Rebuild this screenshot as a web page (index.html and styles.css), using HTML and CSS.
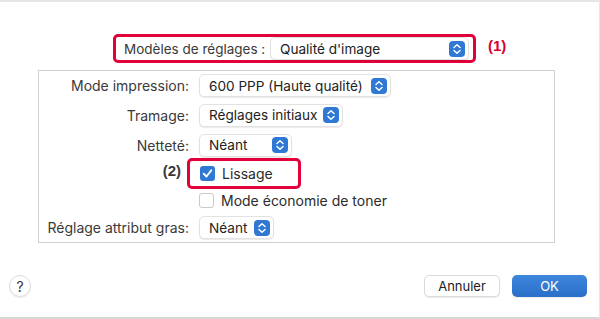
FILE: index.html
```html
<!DOCTYPE html>
<html lang="fr">
<head>
    <meta charset="UTF-8">
    <title>Modèles de réglages</title>
    <link rel="stylesheet" href="styles.css">
</head>
<body>

<div class="dialog">
    <div class="preset-row">
        <div class="mark preset-box">
            <span class="preset-label">Modèles de réglages :</span>
            <div class="popup preset-popup">
                <span>Qualité d'image</span>
                <svg class="stepper" viewBox="0 0 16 16"><rect width="16" height="16" rx="4"/><path d="M5 6.5 8 3.8 11 6.5M5 9.5 8 12.2 11 9.5"/></svg>
            </div>
        </div>
        <span class="tag">(1)</span>
    </div>

    <div class="group">
        <label class="row-label">Mode impression:</label>
        <div class="popup w-mode">
            <span>600 PPP (Haute qualité)</span>
            <svg class="stepper" viewBox="0 0 16 16"><rect width="16" height="16" rx="4"/><path d="M5 6.5 8 3.8 11 6.5M5 9.5 8 12.2 11 9.5"/></svg>
        </div>

        <label class="row-label">Tramage:</label>
        <div class="popup w-tramage">
            <span>Réglages initiaux</span>
            <svg class="stepper" viewBox="0 0 16 16"><rect width="16" height="16" rx="4"/><path d="M5 6.5 8 3.8 11 6.5M5 9.5 8 12.2 11 9.5"/></svg>
        </div>

        <label class="row-label">Netteté:</label>
        <div class="popup w-nettete">
            <span>Néant</span>
            <svg class="stepper" viewBox="0 0 16 16"><rect width="16" height="16" rx="4"/><path d="M5 6.5 8 3.8 11 6.5M5 9.5 8 12.2 11 9.5"/></svg>
        </div>

        <span class="row-label tag tag-2">(2)</span>
        <div class="mark check-box">
            <span class="check on"><svg viewBox="0 0 16 16"><path d="M4 8.3 6.9 11.2 12 4.6"/></svg></span>
            <span>Lissage</span>
        </div>

        <span></span>
        <div class="check-row">
            <span class="check"></span>
            <span>Mode économie de toner</span>
        </div>

        <label class="row-label">Réglage attribut gras:</label>
        <div class="popup w-gras">
            <span>Néant</span>
            <svg class="stepper" viewBox="0 0 16 16"><rect width="16" height="16" rx="4"/><path d="M5 6.5 8 3.8 11 6.5M5 9.5 8 12.2 11 9.5"/></svg>
        </div>
    </div>

    <div class="footer">
        <span class="help">?</span>
        <div class="actions">
            <button class="btn">Annuler</button>
            <button class="btn btn-ok">OK</button>
        </div>
    </div>
</div>

</body>
</html>
```

FILE: styles.css
```css
body {
    margin: 0;
    background-color: #fff;
    font-family: "Inter", "Liberation Sans", sans-serif;
    font-size: 14px;
    color: #2b2b2b;
}
.dialog {
    height: 319px;
    box-sizing: border-box;
    border-top: 2px solid #e6e6e6;
    border-bottom: 2px solid #d8d8d8;
    border-right: 1px solid #e6e6e6;
    display: flex;
    flex-direction: column;
}

/* red annotation frames */
.mark {
    border: 3px solid #e2003a;
    border-radius: 5px;
    box-sizing: border-box;
}
.tag {
    color: #d9002f;
    font-weight: bold;
    font-family: "Liberation Sans", sans-serif;
    font-size: 15px;
}

.preset-row {
    display: flex;
    align-items: center;
    padding-left: 113px;
    margin-top: 32px;
    font-size: 13.5px;
}
.preset-box {
    display: flex;
    align-items: center;
    width: 363px;
    height: 29px;
    padding-left: 8px;
}
.preset-label {
    color: #3a3a3a;
    width: 146px;
}
.preset-popup {
    width: 199px;
    height: 22px;
    padding-left: 14px;
    border-color: #ececec;
    box-shadow: none;
}
.preset-row .tag {
    margin-left: 12px;
    margin-top: -7px;
}

/* popup buttons */
.popup {
    display: flex;
    align-items: center;
    justify-content: space-between;
    box-sizing: border-box;
    height: 23px;
    padding: 0 3px 0 9px;
    border: 1px solid #e2e2e2;
    border-radius: 5px;
    background-color: #fff;
    box-shadow: 0 1px 1px rgba(0, 0, 0, 0.08);
    color: #222;
    font-size: 13.6px;
}
.stepper {
    width: 16px;
    height: 16px;
    flex-shrink: 0;
}
.stepper rect {
    fill: #2f78d4;
}
.stepper path {
    fill: none;
    stroke: #fff;
    stroke-width: 1.5;
    stroke-linecap: round;
    stroke-linejoin: round;
}
.w-mode { width: 192px; }
.w-tramage { width: 144px; }
.w-nettete { width: 93px; }
.w-gras { width: 75px; }

.group {
    margin-left: 38px;
    margin-top: 7px;
    width: 517px;
    box-sizing: border-box;
    border: 1px solid #cfcfcf;
    display: grid;
    grid-template-columns: 150px auto;
    grid-template-rows: 29px 30px 30px 27px 26px 29px;
    column-gap: 10px;
    align-items: center;
    justify-items: start;
}
.row-label {
    justify-self: end;
    color: #3a3a3a;
}
.tag-2 {
    margin-right: 8px;
    margin-top: -6px;
}

/* checkboxes */
.check-box {
    display: flex;
    align-items: center;
    gap: 7px;
    width: 114px;
    height: 31px;
    margin-left: -12px;
    padding-left: 10px;
}
.check-row {
    display: flex;
    align-items: center;
    gap: 7px;
}
.check {
    width: 15px;
    height: 15px;
    box-sizing: border-box;
    border: 1px solid #c9c9c9;
    border-radius: 3px;
    background-color: #fff;
    display: flex;
}
.check.on {
    border: none;
    background-color: #2f78d4;
}
.check svg {
    width: 15px;
    height: 15px;
}
.check path {
    fill: none;
    stroke: #fff;
    stroke-width: 2;
    stroke-linecap: round;
    stroke-linejoin: round;
}

/* bottom bar */
.footer {
    display: flex;
    align-items: center;
    justify-content: space-between;
    margin-top: 32px;
    padding: 0 12px 0 9px;
}
.help {
    width: 22px;
    height: 22px;
    box-sizing: border-box;
    border: 1px solid #dcdcdc;
    border-radius: 50%;
    box-shadow: 0 1px 1px rgba(0, 0, 0, 0.08);
    display: flex;
    align-items: center;
    justify-content: center;
    font-size: 14px;
    color: #333;
}
.actions {
    display: flex;
    gap: 12px;
}
.btn {
    width: 76px;
    height: 22px;
    font-family: "Inter", "Liberation Sans", sans-serif;
    font-size: 13px;
    color: #222;
    background-color: #fff;
    border: 1px solid #dadada;
    border-radius: 5px;
    box-shadow: 0 1px 1px rgba(0, 0, 0, 0.08);
    padding: 0;
}
.btn-ok {
    width: 75px;
    color: #fff;
    border: none;
    background: linear-gradient(#3d87dc, #2a6fc9);
}
```
